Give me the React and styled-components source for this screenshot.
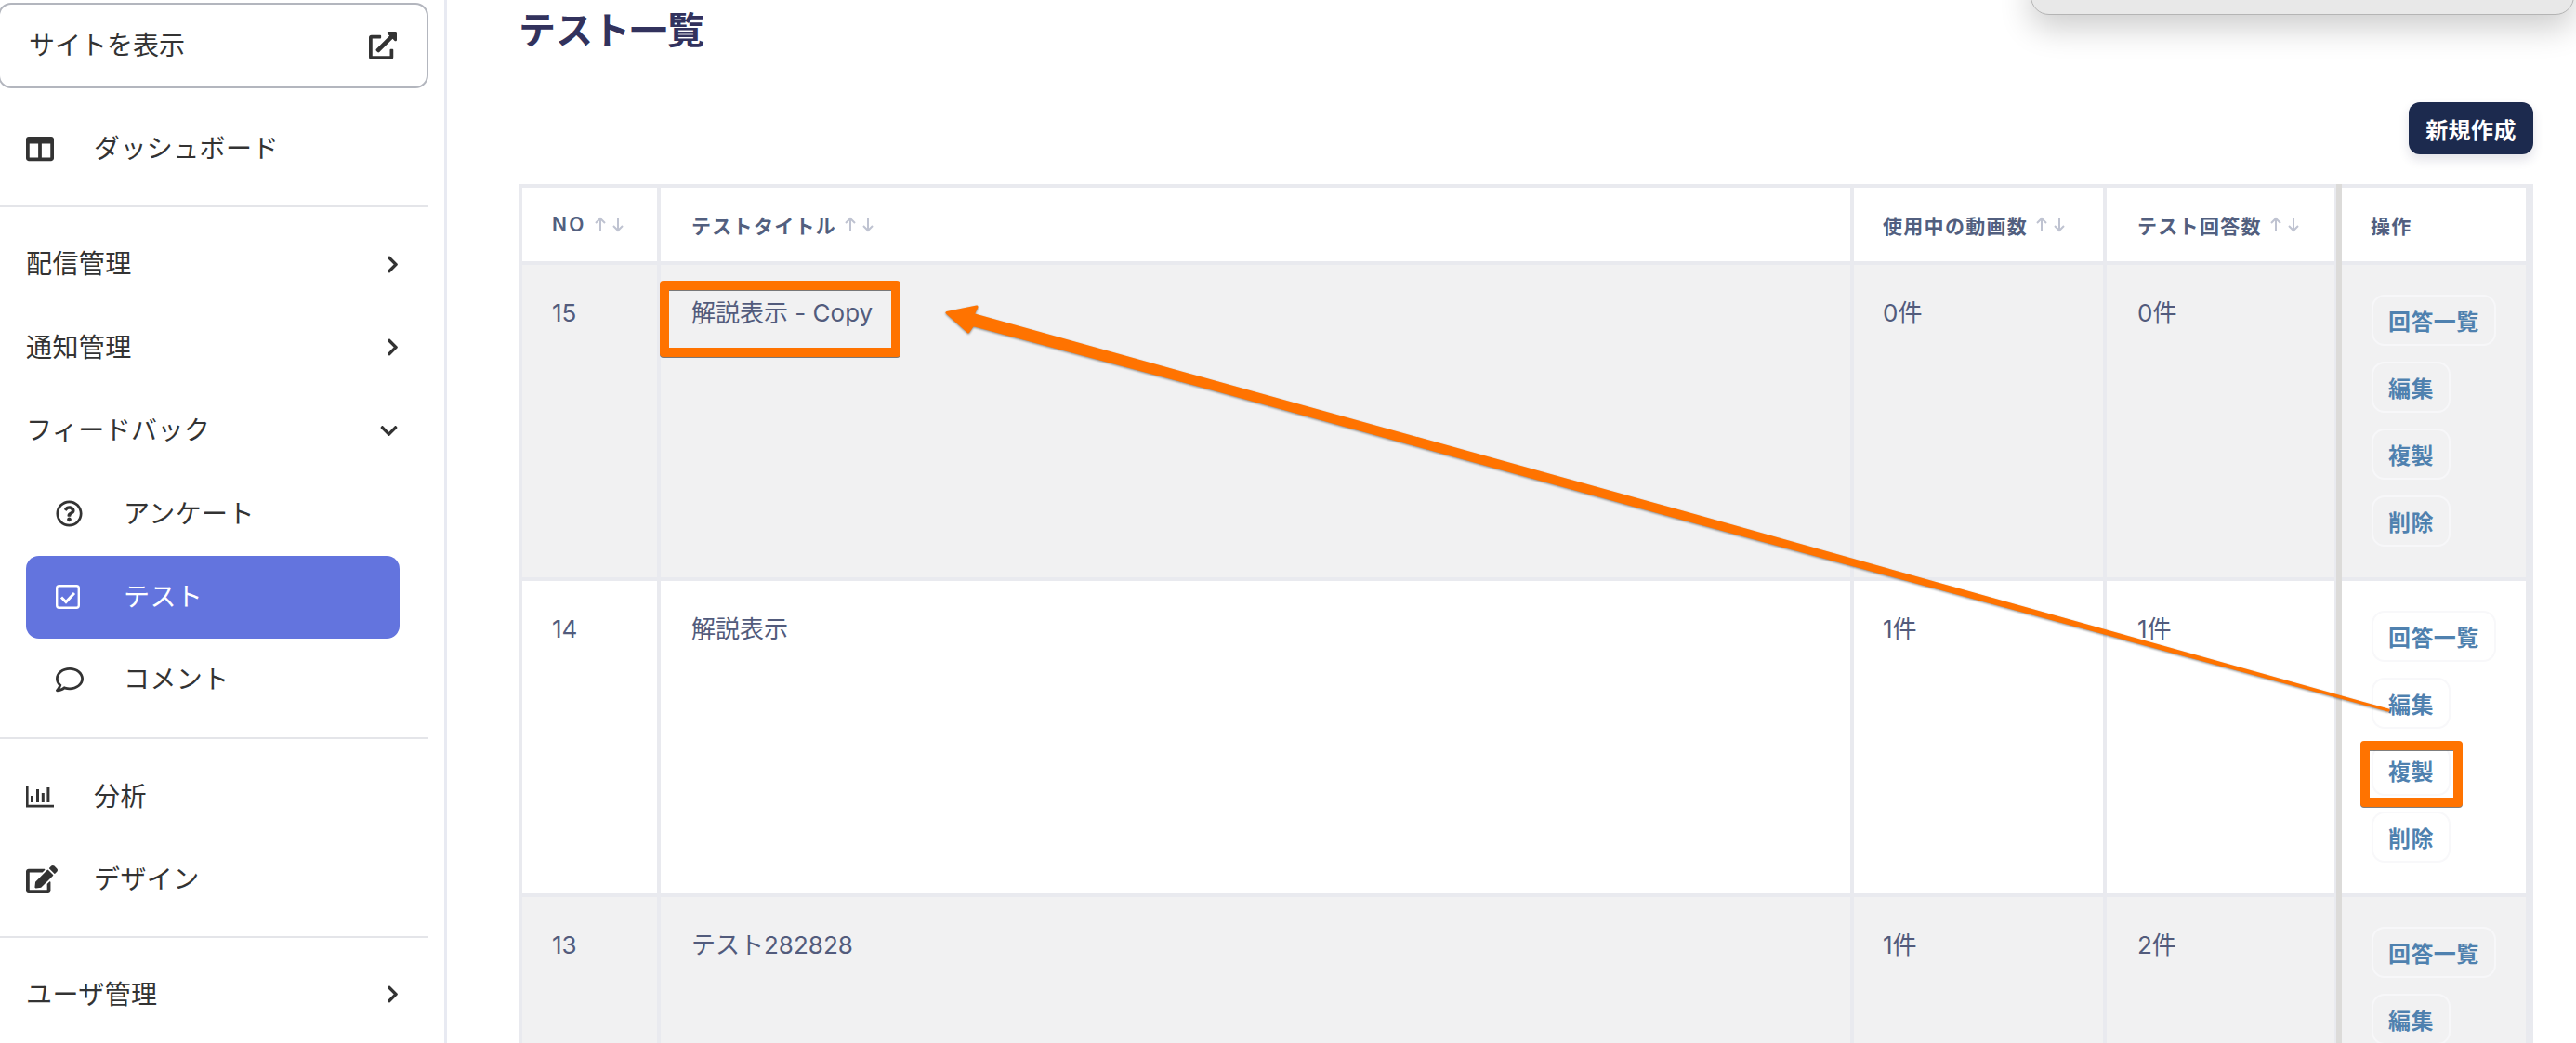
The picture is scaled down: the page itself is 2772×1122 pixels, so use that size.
import React from 'react'
import styled, { createGlobalStyle } from 'styled-components'
import {
  FaColumns,
  FaChevronRight,
  FaChevronDown,
  FaExternalLinkAlt,
  FaRegQuestionCircle,
  FaRegComment,
  FaEdit,
} from 'react-icons/fa'

const GlobalStyle = createGlobalStyle`
  html, body {
    margin: 0;
    padding: 0;
    background: #fff;
    overflow: hidden;
  }
  body {
    font-family: Inter, "Noto Sans CJK JP", sans-serif;
  }
  * { box-sizing: border-box; }
`

const Page = styled.div`
  position: relative;
  display: flex;
  width: 2772px;
  height: 1122px;
  overflow: hidden;
`

/* sidebar */
const Sidebar = styled.aside`
  flex: 0 0 481px;
  height: 100%;
  padding: 3px 17px 0 0;
  border-right: 3px solid #e8eaf2;
  color: #333;
`

const SiteButton = styled.a`
  display: flex;
  align-items: center;
  justify-content: space-between;
  height: 92px;
  margin-left: -2px;
  padding: 0 32px 0 31px;
  border: 2px solid #b3b6be;
  border-radius: 14px;
  font-size: 28px;
  svg { font-size: 30px; }
`

const Label = styled.span`
  margin-bottom: 4px;
`

const NavRow = styled.div`
  display: flex;
  align-items: center;
  height: 89.5px;
  padding: 0 32px 0 28px;
  font-size: 28px;
  letter-spacing: 0.4px;
`

const TopRow = styled(NavRow)`
  margin-top: 20px;
`

const SubRow = styled(NavRow)`
  padding-left: 60px;
`

const ActiveRow = styled.div`
  display: flex;
  align-items: center;
  height: 89px;
  margin: 0 31px 0 28px;
  padding-left: 32px;
  border-radius: 14px;
  background: #6374de;
  color: #fff;
  font-size: 28px;
  letter-spacing: 0.4px;
`

const IconSlot = styled.span`
  display: flex;
  align-items: center;
  flex: 0 0 ${p => p.$w}px;
  font-size: ${p => p.$size || 30}px;
`

const Chevron = styled.span`
  display: flex;
  margin-left: auto;
  margin-right: ${p => p.$shift || 0}px;
  font-size: 21px;
`

const Divider = styled.hr`
  height: 2px;
  margin: ${p => p.$top}px 0 ${p => p.$bottom}px;
  border: 0;
  background: #e4e5e9;
`

/* main column */
const Main = styled.main`
  flex: 1;
  min-width: 0;
  padding: 0 46px 0 77px;
`

const Title = styled.h1`
  margin: 0;
  height: 64px;
  color: #32325d;
  font-size: 40px;
  font-weight: 700;
  line-height: 66px;
`

const Toolbar = styled.div`
  display: flex;
  justify-content: flex-end;
  margin: 46px 0 32px;
`

const NewButton = styled.button`
  height: 56px;
  width: 134px;
  padding: 0;
  border: 0;
  border-radius: 12px;
  background: #1c2a4e;
  box-shadow: 0 6px 12px rgba(50, 50, 93, 0.14);
  color: #fff;
  font-family: inherit;
  font-size: 24px;
  font-weight: 700;
  letter-spacing: 0.4px;
`

const Table = styled.div`
  display: grid;
  grid-template-columns: 145px 1280px 268px 245px 202px;
  gap: 4px;
  padding: 4px 8px 4px 4px;
  background: #e9eaef;
`

const HeadCell = styled.div`
  display: flex;
  align-items: center;
  height: 79px;
  padding-left: ${p => p.$pad || 33}px;
  background: #fff;
  color: #525f7f;
  font-size: 21px;
  font-weight: 600;
  letter-spacing: ${p => p.$track || 1.3}px;
`

const Cell = styled.div`
  height: 336px;
  padding: 32px 0 0 ${p => p.$pad || 33}px;
  background: ${p => (p.$striped ? '#f1f1f2' : '#fff')};
  color: #525b7c;
  font-size: 26px;
  line-height: 40px;
`

const opsEdge = `
  position: relative;
  margin-left: -2px;
  border-left: 6px solid #dcdbd9;
  &::before {
    content: "";
    position: absolute;
    left: -6px;
    top: -4px;
    width: 6px;
    height: 4px;
    background: #dcdbd9;
  }
`

const OpsHead = styled(HeadCell)`
  ${opsEdge}
  padding-left: 31px;
`

const OpsCell = styled.div`
  ${opsEdge}
  display: flex;
  flex-direction: column;
  align-items: flex-start;
  gap: 17px;
  height: 336px;
  padding: 32px 0 0 32px;
  background: ${p => (p.$striped ? '#f1f1f2' : '#fff')};
`

const OpButton = styled.button`
  flex: none;
  height: 55px;
  padding: 0 16px;
  border: 2px solid ${p => (p.$striped ? '#f7f7f9' : '#f8f8fa')};
  border-radius: 14px;
  background: transparent;
  color: #4f81af;
  font-family: inherit;
  font-size: 24px;
  font-weight: 700;
  letter-spacing: 0.4px;
`

const SortWrap = styled.svg`
  flex: none;
  margin-left: 8px;
`

/* annotations drawn on top of the screenshot */
const WindowEdge = styled.div`
  position: absolute;
  top: -40px;
  left: 2185px;
  width: 585px;
  height: 56px;
  border: 1px solid #b4b4b4;
  border-radius: 20px;
  background: #e8e8e8;
  box-shadow: 0 14px 34px rgba(0, 0, 0, 0.2);
`

const Highlight = styled.div`
  position: absolute;
  left: ${p => p.$x}px;
  top: ${p => p.$y}px;
  width: ${p => p.$w}px;
  height: ${p => p.$h}px;
  border: 10px solid #ff7300;
  border-radius: 4px;
  filter: drop-shadow(0 1px 0.5px rgba(0, 0, 0, 0.5));
`

const ArrowLayer = styled.svg`
  position: absolute;
  inset: 0;
  pointer-events: none;
  filter: drop-shadow(0 1px 1px rgba(0, 0, 0, 0.45));
`

const SortIcon = () => (
  <SortWrap width="36" height="17" viewBox="0 0 36 17" fill="none" stroke="#bfc3d1" strokeWidth="2">
    <path d="M7 16V2M2 7l5-5 5 5" />
    <path d="M26 1v14M21 10l5 5 5-5" />
  </SortWrap>
)

const TestIcon = () => (
  <svg width="26" height="26" viewBox="0 0 26 26" fill="none" stroke="#fff">
    <rect x="1.2" y="1.2" width="23.6" height="23.6" rx="2.5" strokeWidth="2.4" />
    <path d="M6 13.5l5 5 9-9.5" strokeWidth="3" />
  </svg>
)

const ChartIcon = () => (
  <svg width="30" height="24" viewBox="0 0 30 24" fill="#333">
    <path d="M0 0h2.6v20.8H30v2.6H0z" />
    <rect x="5" y="11" width="3" height="7" />
    <rect x="11" y="4" width="3" height="14" />
    <rect x="16.8" y="8" width="3" height="10" />
    <rect x="22.4" y="2" width="3" height="16" />
  </svg>
)

const Sort = ({ children }) => (
  <>
    {children}
    <SortIcon />
  </>
)

const allActions = ['回答一覧', '編集', '複製', '削除']

// the last row runs off the bottom of the window after its second button
const rows = [
  { no: 15, title: '解説表示 - Copy', movies: '0件', answers: '0件', striped: true, actions: allActions },
  { no: 14, title: '解説表示', movies: '1件', answers: '1件', striped: false, actions: allActions },
  { no: 13, title: 'テスト282828', movies: '1件', answers: '2件', striped: true, actions: allActions.slice(0, 2) },
]

export default function App() {
  return (
    <Page>
      <GlobalStyle />
      <Sidebar>
        <SiteButton>
          <Label>サイトを表示</Label>
          <FaExternalLinkAlt />
        </SiteButton>
        <TopRow>
          <IconSlot $w={73}><FaColumns /></IconSlot>
          <Label>ダッシュボード</Label>
        </TopRow>
        <Divider $top={16} $bottom={17} />
        <NavRow><Label>配信管理</Label><Chevron $shift={-4}><FaChevronRight /></Chevron></NavRow>
        <NavRow><Label>通知管理</Label><Chevron $shift={-4}><FaChevronRight /></Chevron></NavRow>
        <NavRow><Label>フィードバック</Label><Chevron><FaChevronDown /></Chevron></NavRow>
        <SubRow>
          <IconSlot $w={73} $size={29}><FaRegQuestionCircle /></IconSlot>
          <Label>アンケート</Label>
        </SubRow>
        <ActiveRow>
          <IconSlot $w={73}><TestIcon /></IconSlot>
          <Label>テスト</Label>
        </ActiveRow>
        <SubRow>
          <IconSlot $w={73}><FaRegComment /></IconSlot>
          <Label>コメント</Label>
        </SubRow>
        <Divider $top={17} $bottom={17} />
        <NavRow>
          <IconSlot $w={73}><ChartIcon /></IconSlot>
          <Label>分析</Label>
        </NavRow>
        <NavRow>
          <IconSlot $w={73} $size={34}><FaEdit /></IconSlot>
          <Label>デザイン</Label>
        </NavRow>
        <Divider $top={16} $bottom={16} />
        <NavRow><Label>ユーザ管理</Label><Chevron $shift={-4}><FaChevronRight /></Chevron></NavRow>
      </Sidebar>

      <Main>
        <Title>テスト一覧</Title>
        <Toolbar>
          <NewButton>新規作成</NewButton>
        </Toolbar>
        <Table>
          <HeadCell $pad={32} $track={2.4}><Sort>NO</Sort></HeadCell>
          <HeadCell><Sort>テストタイトル</Sort></HeadCell>
          <HeadCell $pad={31}><Sort>使用中の動画数</Sort></HeadCell>
          <HeadCell><Sort>テスト回答数</Sort></HeadCell>
          <OpsHead>操作</OpsHead>
          {rows.map(row => (
            <React.Fragment key={row.no}>
              <Cell $striped={row.striped} $pad={32}>{row.no}</Cell>
              <Cell $striped={row.striped}>{row.title}</Cell>
              <Cell $striped={row.striped} $pad={31}>{row.movies}</Cell>
              <Cell $striped={row.striped}>{row.answers}</Cell>
              <OpsCell $striped={row.striped}>
                {row.actions.map(label => (
                  <OpButton key={label} $striped={row.striped}>{label}</OpButton>
                ))}
              </OpsCell>
            </React.Fragment>
          ))}
        </Table>
      </Main>

      <WindowEdge />
      <Highlight $x={710} $y={302} $w={259} $h={82} />
      <Highlight $x={2540} $y={797} $w={110} $h={71} />
      <ArrowLayer width="2772" height="1122" viewBox="0 0 2772 1122">
        <polygon
          points="1019,336.5 1051,330 1047,338.5 1300,409 1800,548 2570,764 1800,555 1300,417 1047,349.5 1042,357"
          fill="#ff7300"
          stroke="#ff7300"
          strokeWidth="3"
          strokeLinejoin="round"
        />
      </ArrowLayer>
    </Page>
  )
}
